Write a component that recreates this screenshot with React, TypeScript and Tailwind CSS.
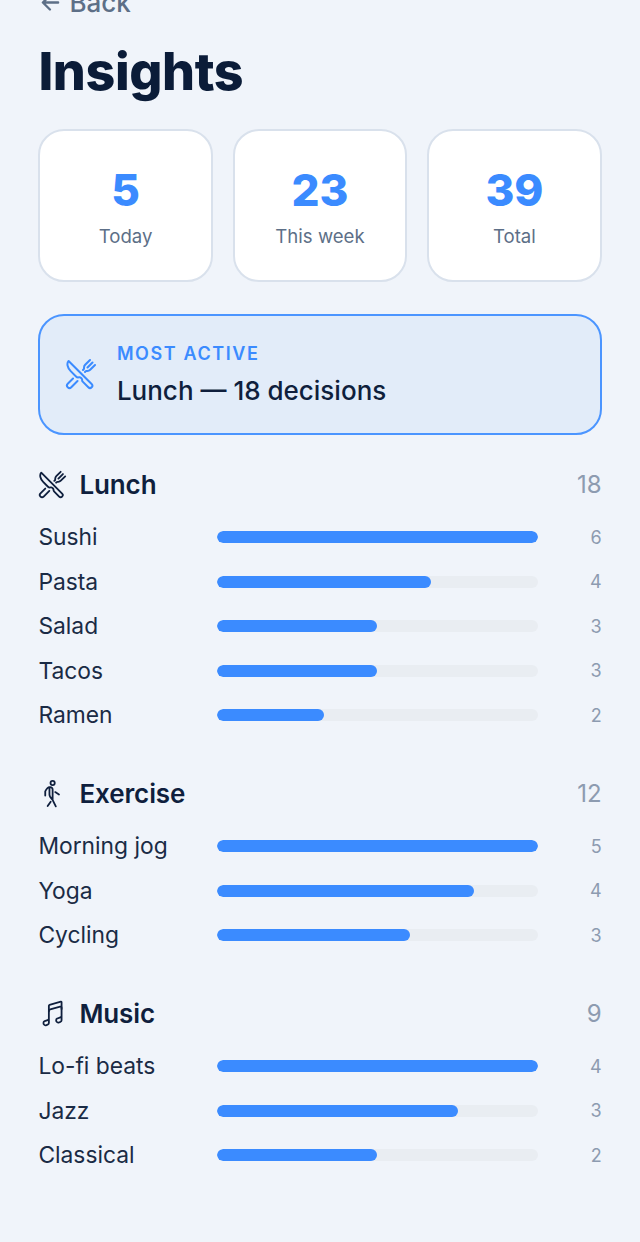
import { IoArrowBack, IoMusicalNotesOutline, IoRestaurantOutline, IoWalkOutline } from 'react-icons/io5'
import type { IconType } from 'react-icons'

interface Group {
  name: string
  total: number
  Icon: IconType
  items: [string, number][]
}

const stats = [
  { value: 5, label: 'Today' },
  { value: 23, label: 'This week' },
  { value: 39, label: 'Total' },
]

const groups: Group[] = [
  {
    name: 'Lunch',
    total: 18,
    Icon: IoRestaurantOutline,
    items: [['Sushi', 6], ['Pasta', 4], ['Salad', 3], ['Tacos', 3], ['Ramen', 2]],
  },
  {
    name: 'Exercise',
    total: 12,
    Icon: IoWalkOutline,
    items: [['Morning jog', 5], ['Yoga', 4], ['Cycling', 3]],
  },
  {
    name: 'Music',
    total: 9,
    Icon: IoMusicalNotesOutline,
    items: [['Lo-fi beats', 4], ['Jazz', 3], ['Classical', 2]],
  },
]

function GroupSection({ group }: { group: Group }) {
  const max = group.items[0][1]
  return (
    <section className="mb-[39.6px]">
      <div className="flex items-center h-[32px] mb-[15px]">
        <group.Icon className="w-[29px] h-[29px] text-[#0f1f3d] mr-[12px]" />
        <span className="text-[26px] font-semibold text-[#0f1f3d] tracking-[-0.1px]">{group.name}</span>
        <span className="ml-auto pt-[2px] text-[24px] text-[#8d9bb0]">{group.total}</span>
      </div>
      {group.items.map(([name, count]) => (
        <div key={name} className="flex items-center h-[44.5px]">
          <span className="w-[178.6px] text-[22.8px] text-[#1a2b45]">{name}</span>
          <div className="w-[321px] h-[12px] rounded-full bg-[#e9edf2] overflow-hidden">
            <div className="h-full rounded-full bg-[#3b8bff]" style={{ width: `${(count / max) * 100}%` }} />
          </div>
          <span className="ml-auto text-[18px] text-[#8d9bb0]">{count}</span>
        </div>
      ))}
    </section>
  )
}

export default function App() {
  return (
    <div className="h-[1242px] overflow-hidden bg-[#f0f4fa] px-[38.4px] font-['Inter',sans-serif]">
      <div className="flex items-center h-[24px] -mt-[10px] text-[#5d6f87]">
        <IoArrowBack className="w-[25px] h-[25px] mr-[6px]" />
        <span className="text-[26px] font-medium">Back</span>
      </div>
      <h1 className="mt-[26px] text-[52px] leading-[64px] font-extrabold tracking-[-0.4px] text-[#0b1c38]">Insights</h1>
      <div className="grid grid-cols-3 gap-[20px] mt-[25px]">
        {stats.map(s => (
          <div key={s.label} className="h-[153px] rounded-[26px] bg-white border-2 border-[#d9e1ec] flex flex-col items-center pt-[32.5px]">
            <div className="text-[44px] leading-[52px] font-extrabold text-[#3b8bff]">{s.value}</div>
            <div className="mt-[8.5px] text-[18.6px] leading-[24px] text-[#5d6f87]">{s.label}</div>
          </div>
        ))}
      </div>
      <div className="flex items-center h-[120.5px] mt-[32px] mb-[33.5px] pl-[25px] pt-[2px] rounded-[26px] border-2 border-[#4b95ff] bg-[#e2ecf9]">
        <IoRestaurantOutline className="w-[32px] h-[32px] -mt-[2px] text-[#3b8bff] mr-[19.5px]" />
        <div>
          <div className="text-[18px] leading-[24px] font-semibold tracking-[1.6px] text-[#3b8bff]">MOST ACTIVE</div>
          <div className="mt-[7px] text-[26px] leading-[36px] font-medium text-[#0f1f3d]">Lunch — 18 decisions</div>
        </div>
      </div>
      {groups.map(g => (
        <GroupSection key={g.name} group={g} />
      ))}
    </div>
  )
}
